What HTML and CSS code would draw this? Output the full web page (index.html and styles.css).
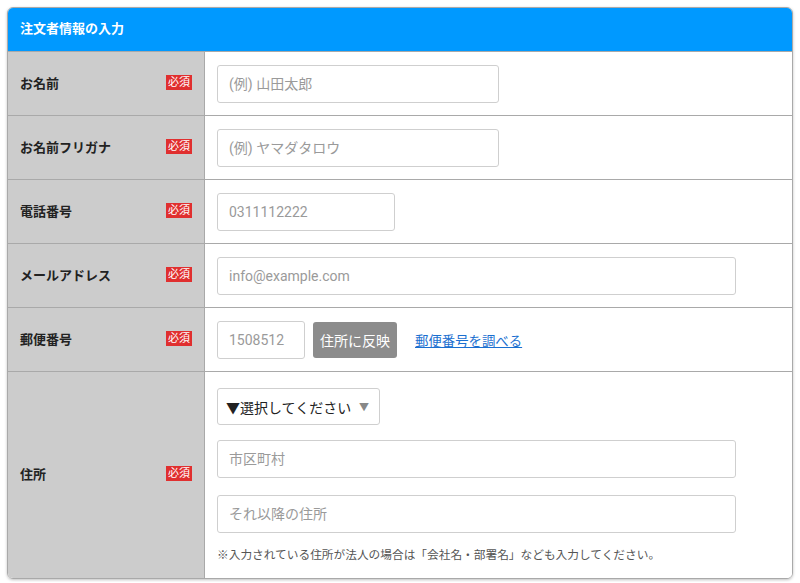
FILE: index.html
```html
<!DOCTYPE html>
<html lang="ja">
<head>
<meta charset="utf-8">
<link rel="stylesheet" href="styles.css">
</head>
<body>
<div class="page">
  <section class="card">
    <h2 class="card-head">注文者情報の入力</h2>
    <div class="row">
      <div class="label"><span>お名前</span><span class="req">必須</span></div>
      <div class="field"><input class="inp w-name" placeholder="(例) 山田太郎"></div>
    </div>
    <div class="row">
      <div class="label"><span>お名前フリガナ</span><span class="req">必須</span></div>
      <div class="field"><input class="inp w-name" placeholder="(例) ヤマダタロウ"></div>
    </div>
    <div class="row">
      <div class="label"><span>電話番号</span><span class="req">必須</span></div>
      <div class="field"><input class="inp w-tel" placeholder="0311112222"></div>
    </div>
    <div class="row">
      <div class="label"><span>メールアドレス</span><span class="req">必須</span></div>
      <div class="field"><input class="inp w-full" placeholder="info@example.com"></div>
    </div>
    <div class="row">
      <div class="label"><span>郵便番号</span><span class="req">必須</span></div>
      <div class="field zip">
        <input class="inp w-zip" placeholder="1508512">
        <button class="btn">住所に反映</button>
        <a class="link" href="#">郵便番号を調べる</a>
      </div>
    </div>
    <div class="row row-addr">
      <div class="label"><span>住所</span><span class="req">必須</span></div>
      <div class="field addr">
        <div class="select"><span>▼選択してください</span><span class="arrow">▼</span></div>
        <input class="inp w-full" placeholder="市区町村">
        <input class="inp w-full" placeholder="それ以降の住所">
        <p class="note">※入力されている住所が法人の場合は「会社名・部署名」なども入力してください。</p>
      </div>
    </div>
  </section>
</div>
</body>
</html>
```

FILE: styles.css
```css
* { box-sizing: border-box; }
html, body { margin: 0; padding: 0; background: #fff; }
body {
  font-family: Roboto, "Noto Sans CJK JP", sans-serif;
  color: #222;
}
.page { padding: 7px 7px 3px 7px; }
.card {
  border: 1px solid #a9a9a9;
  border-radius: 6px;
  overflow: hidden;
  box-shadow: 0 1px 3px rgba(0,0,0,0.25);
}
.card-head {
  margin: 0;
  height: 44px;
  background: #0099ff;
  color: #fff;
  font-size: 13px;
  font-weight: bold;
  line-height: 41px;
  padding-left: 12px;
  border-bottom: 1px solid #a9a9a9;
}
.row {
  display: flex;
  border-bottom: 1px solid #a9a9a9;
  min-height: 64px;
}
.row:last-child { border-bottom: none; }
.label {
  width: 197px;
  flex: none;
  background: #cccccc;
  border-right: 1px solid #a9a9a9;
  display: flex;
  align-items: center;
  justify-content: space-between;
  padding: 0 12px 3px 12px;
  font-size: 13px;
  font-weight: bold;
  color: #222;
}
.req {
  background: #e02f2f;
  color: #fff;
  font-size: 11px;
  font-weight: normal;
  line-height: 15px;
  height: 15px;
  padding: 0 2px;
}
.field {
  flex: 1;
  display: flex;
  align-items: center;
  padding: 0 12px;
  background: #fff;
}
.inp {
  height: 38px;
  border: 1px solid #cfcfcf;
  border-radius: 3px;
  padding: 0 11px;
  font-family: inherit;
  font-size: 14px;
  color: #333;
  background: #fff;
  outline: none;
}
.inp::placeholder { color: #9a9a9a; }
.w-name { width: 282px; }
.w-tel { width: 178px; }
.w-full { width: 519px; }
.w-zip { width: 88px; }
.btn {
  margin-left: 8px;
  width: 84px;
  height: 36px;
  border: none;
  border-radius: 3px;
  background: #8c8c8c;
  color: #fff;
  font-family: inherit;
  font-size: 14px;
  padding: 0;
}
.link {
  margin-left: 18px;
  color: #1a6fd0;
  font-size: 13.4px;
}
.addr {
  flex-direction: column;
  align-items: flex-start;
  padding-top: 16px;
  padding-bottom: 15px;
}
.select {
  width: 163px;
  height: 37px;
  border: 1px solid #cfcfcf;
  border-radius: 3px;
  display: flex;
  align-items: center;
  justify-content: space-between;
  padding: 0 10px 0 8px;
  font-size: 14px;
  color: #222;
  margin-bottom: 15px;
}
.arrow { color: #888; font-size: 10px; }
.addr .inp + .inp { margin-top: 17px; }
.note {
  margin: 14px 0 0 0;
  font-size: 11.7px;
  color: #555;
  line-height: 16px;
}
```
